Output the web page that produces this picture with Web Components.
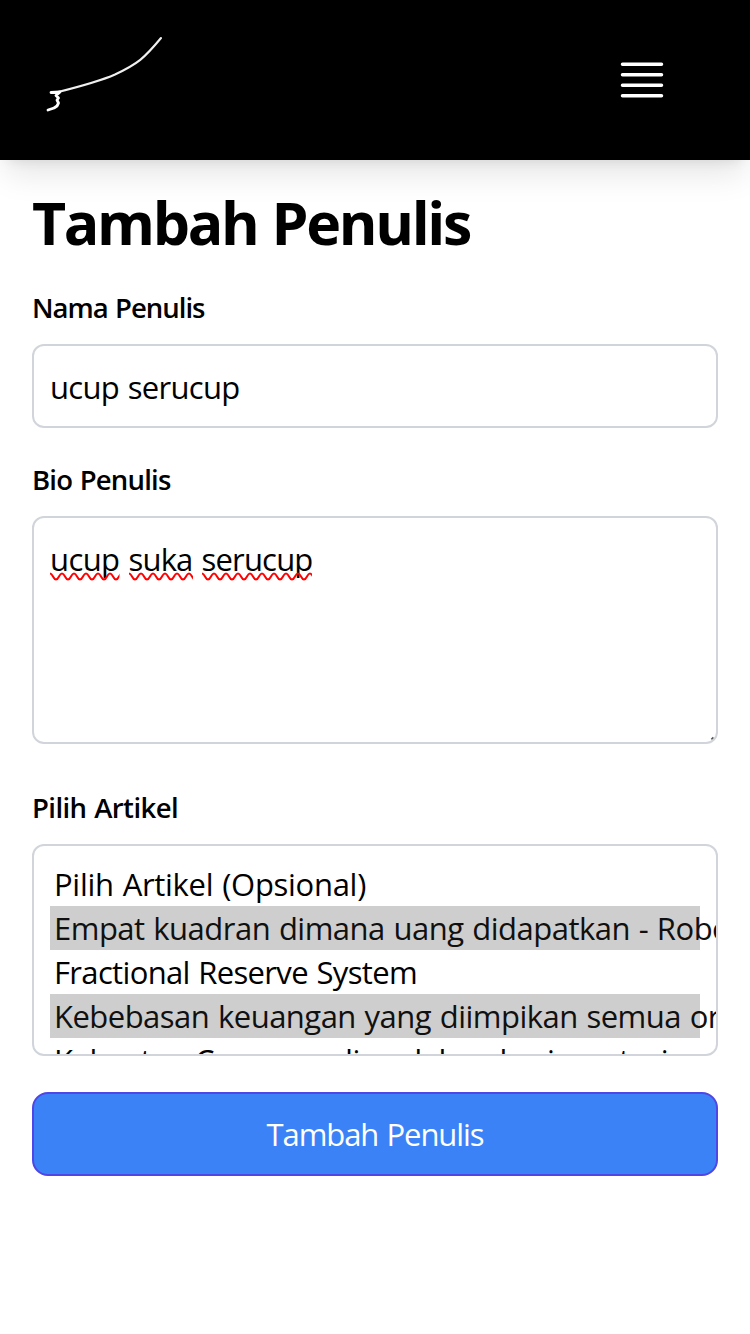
<!DOCTYPE html>
<html lang="id">
<head>
<meta charset="utf-8">
<title>Tambah Penulis</title>
<style>
html, body { margin: 0; background: #fff; }
body { font-family: "Open Sans", "Noto Sans", sans-serif; color: #000; }
</style>
</head>
<body>
<author-page></author-page>
<script>
const define = (name, html, setup) => customElements.define(name, class extends HTMLElement {
  connectedCallback() {
    if (this.shadowRoot) return;
    const t = document.createElement('template');
    t.innerHTML = html;
    this.attachShadow({ mode: 'open' }).append(t.content.cloneNode(true));
    if (setup) setup(this, this.shadowRoot);
  }
});

// A single line of text tracked so that its advance equals the "span" attribute.
define('tracked-text', `<style>:host{display:inline-block;white-space:nowrap;word-spacing:1.2px}span{display:inline-block}</style><span><slot></slot></span>`, (host, root) => {
  const span = root.querySelector('span');
  const w = span.getBoundingClientRect().width;
  const n = host.textContent.length;
  host.style.letterSpacing = ((+host.getAttribute('span') - w) / n).toFixed(3) + 'px';
});

define('site-header', `
<style>
:host{display:flex;justify-content:space-between;align-items:center;height:160px;box-sizing:border-box;padding:0 84px 0 40px;background:#000;box-shadow:0 20px 30px -6px rgba(0,0,0,.1),0 8px 12px -8px rgba(0,0,0,.1)}
svg{display:block;fill:none;stroke:#fff;stroke-linecap:round;stroke-linejoin:round}
</style>
<svg width="130" height="100" viewBox="40 30 130 100">
<path stroke-width="2.1" stroke="#f0f0f0" d="M57 92.3C76 87.500 98 82 115 74.500C138 63.500 144 58.500 161 38"/>
<path stroke-width="2.8" d="M51 92.500L60 91.900L56 95.500L58.500 98L57 100L58.500 103L57 106L54 108L48 110"/>
</svg>
<svg width="48" height="48" viewBox="618 56 48 48"><path stroke-width="3.5" d="M622.500 64.300H661.500M622.500 74.800H661.500M622.500 85.200H661.500M622.500 95.700H661.500"/></svg>`);

define('form-field', `
<style>
:host{display:block}
.label{height:40px;line-height:40px;font-size:27.5px;font-weight:600;margin-bottom:16px}
</style><div class="label"><slot name="label"></slot></div><slot></slot>`);

define('text-box', `
<style>
:host{display:block;position:relative;box-sizing:border-box;border:2px solid #d1d5db;border-radius:12px;padding:17px 16px 15px;font-size:31px;line-height:48px;height:var(--box-height,84px);overflow:hidden;white-space:nowrap}
.grip{display:none;position:absolute;right:1px;bottom:1px}
:host([resizable]) .grip{display:block}
</style><slot></slot><svg class="grip" width="5" height="5"><path d="M1.500 3.500L3.500 1.500" stroke="#555" stroke-width="2"/></svg>`);

define('misspelt-word', `
<style>
:host{display:inline-block;position:relative}
svg{position:absolute;left:0;top:37px;width:100%;height:9px}
</style><slot></slot><svg><defs><pattern id="w" width="12" height="9" patternUnits="userSpaceOnUse"><path d="M-6 7.500C-3 7.500 -3 1.500 0 1.500S3 7.500 6 7.500S9 1.500 12 1.500S15 7.500 18 7.500" fill="none" stroke="red" stroke-width="2"/></pattern></defs><rect width="100%" height="9" fill="url(#w)"/></svg>`);

define('list-box', `
<style>
:host{display:block;box-sizing:border-box;height:212px;border:2px solid #d1d5db;border-radius:12px;padding:16px;overflow:hidden}
</style><slot></slot>`);

define('list-option', `
<style>
:host{display:block;height:44px;line-height:45px;padding-left:4px;font-size:31px;white-space:nowrap}
:host([selected]){background:#cecece;color:#101010}
</style><slot></slot>`);

define('submit-button', `
<style>
:host{display:flex;align-items:center;justify-content:center;box-sizing:border-box;height:84px;border:2px solid #4f46e5;border-radius:16px;background:#3b82f6;color:#fff;font-size:31px;line-height:48px}
</style><slot></slot>`);

define('author-page', `
<style>
:host{display:block}
main{padding:24px 32px 0}
h1{margin:0;height:80px;line-height:76px;font-size:59px;font-weight:700}
form-field{margin-top:24px}
form-field.bio{margin-top:32px}
form-field.articles{margin-top:44px}
text-box.area{--box-height:228px}
misspelt-word + misspelt-word{margin-left:9px}
submit-button{margin-top:36px}
</style>
<site-header></site-header>
<main>
<h1><tracked-text span="438">Tambah Penulis</tracked-text></h1>
<form-field><tracked-text slot="label" span="172.500">Nama Penulis</tracked-text><text-box><tracked-text span="189.500">ucup serucup</tracked-text></text-box></form-field>
<form-field class="bio"><tracked-text slot="label" span="138.500">Bio Penulis</tracked-text><text-box class="area" resizable><misspelt-word><tracked-text span="69.500">ucup</tracked-text></misspelt-word><misspelt-word><tracked-text span="64">suka</tracked-text></misspelt-word><misspelt-word><tracked-text span="111">serucup</tracked-text></misspelt-word></text-box></form-field>
<form-field class="articles"><tracked-text slot="label" span="146">Pilih Artikel</tracked-text>
<list-box>
<list-option><tracked-text span="312">Pilih Artikel (Opsional)</tracked-text></list-option>
<list-option selected><tracked-text span="675">Empat kuadran dimana uang didapatkan - Robe</tracked-text></list-option>
<list-option><tracked-text span="363">Fractional Reserve System</tracked-text></list-option>
<list-option selected><tracked-text span="666">Kebebasan keuangan yang diimpikan semua or</tracked-text></list-option>
<list-option><tracked-text span="614">Kekuatan Compounding dalam berinvestasi</tracked-text></list-option>
</list-box></form-field>
<submit-button><tracked-text span="217">Tambah Penulis</tracked-text></submit-button>
</main>`);
</script>
</body>
</html>
